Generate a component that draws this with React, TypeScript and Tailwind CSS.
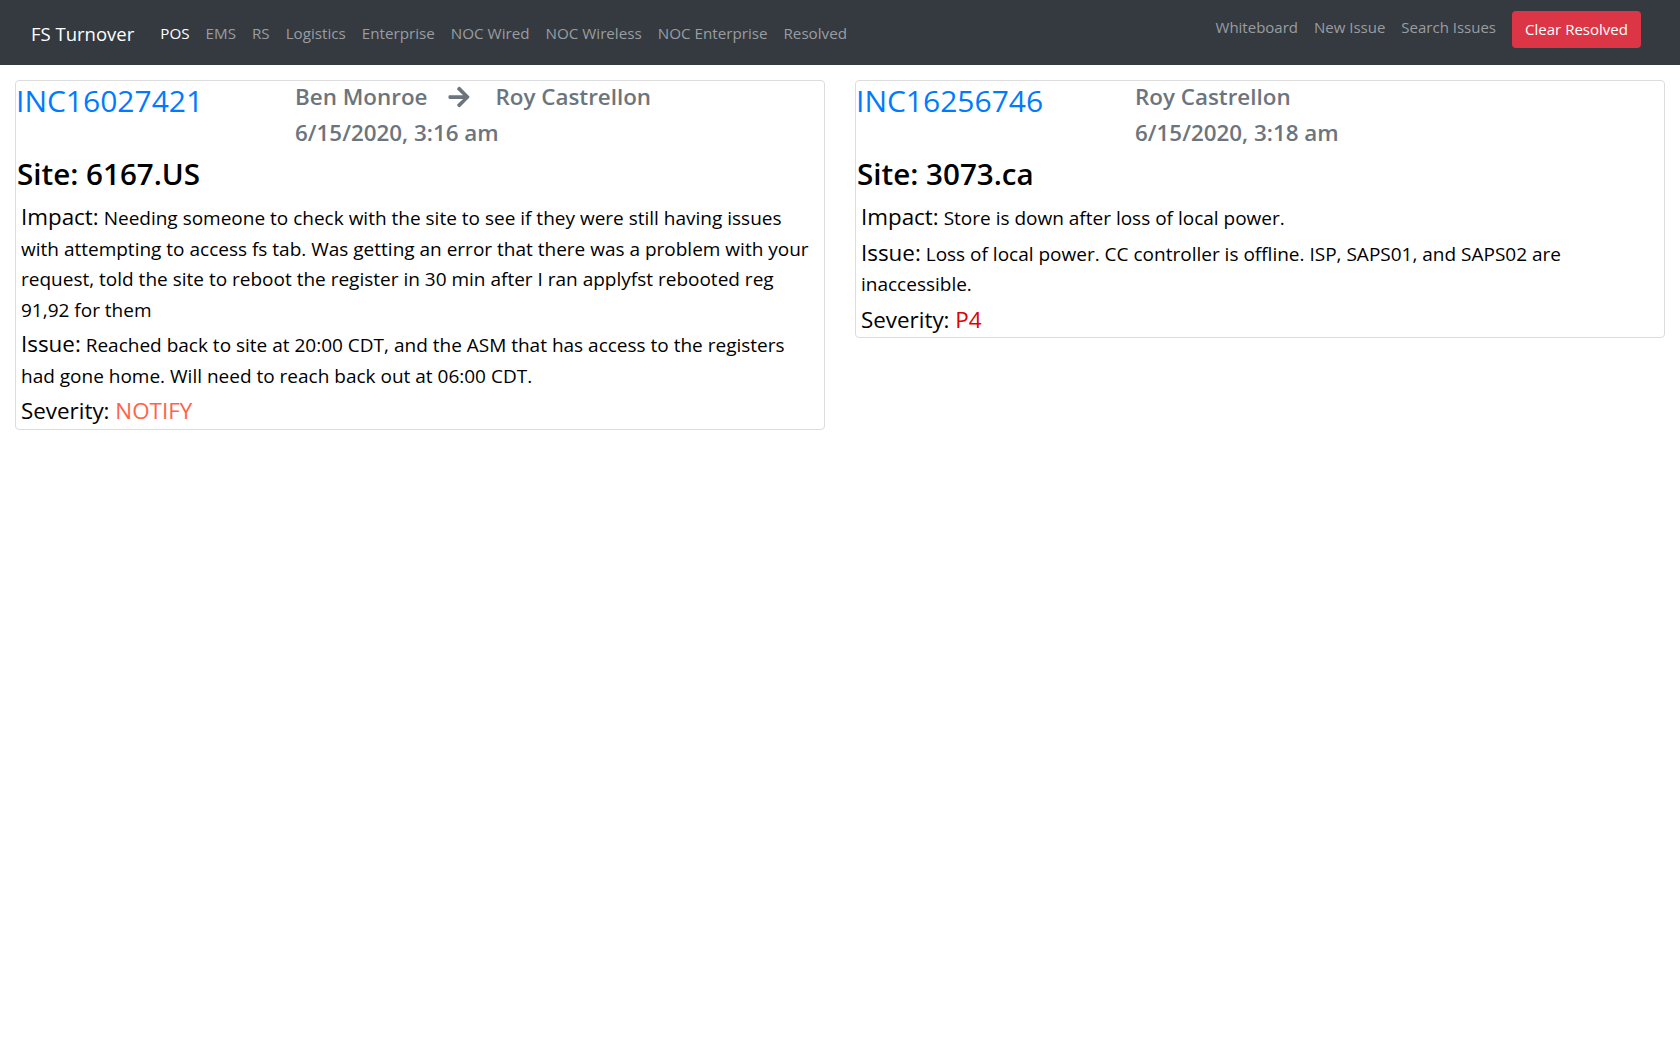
import React from 'react';
import { FaArrowRight } from 'react-icons/fa';

type Ticket = {
  id: string;
  from?: string;
  to: string;
  date: string;
  site: string;
  impact: string;
  issue: string;
  severity: string;
  severityColor: string;
};

const navLinks = ['POS', 'EMS', 'RS', 'Logistics', 'Enterprise', 'NOC Wired', 'NOC Wireless', 'NOC Enterprise', 'Resolved'];

const tickets: Ticket[] = [
  {
    id: 'INC16027421',
    from: 'Ben Monroe',
    to: 'Roy Castrellon',
    date: '6/15/2020, 3:16 am',
    site: '6167.US',
    impact:
      'Needing someone to check with the site to see if they were still having issues with attempting to access fs tab. Was getting an error that there was a problem with your request, told the site to reboot the register in 30 min after I ran applyfst rebooted reg 91,92 for them',
    issue:
      'Reached back to site at 20:00 CDT, and the ASM that has access to the registers had gone home. Will need to reach back out at 06:00 CDT.',
    severity: 'NOTIFY',
    severityColor: 'text-[#ff6347]',
  },
  {
    id: 'INC16256746',
    to: 'Roy Castrellon',
    date: '6/15/2020, 3:18 am',
    site: '3073.ca',
    impact: 'Store is down after loss of local power.',
    issue: 'Loss of local power. CC controller is offline. ISP, SAPS01, and SAPS02 are inaccessible.',
    severity: 'P4',
    severityColor: 'text-[#e00000]',
  },
];

function TicketCard({ t }: { t: Ticket }) {
  return (
    <div className="border border-[#dcdcdc] rounded-[4px] pb-[2px]">
      {/* En-tête : numéro + personnes */}
      <div className="flex">
        <div className="w-[279px] text-[30px] leading-[38px] mt-[1px] text-[#007bff]">{t.id}</div>
        <div className="text-[22.4px] font-semibold text-[#6c757d]">
          <div className="flex items-center leading-[29px] mt-[1px] mb-[7px]">
            {t.from && (
              <>
                <span>{t.from}</span>
                <FaArrowRight size={24} className="ml-[20px] mr-[24px] text-[#6c757d]" />
              </>
            )}
            <span>{t.to}</span>
          </div>
          <div className="leading-[29px]">{t.date}</div>
        </div>
      </div>

      <div className="pl-[1px] mt-[8px] text-[29.6px] leading-[38px] font-semibold text-black">Site: {t.site}</div>

      <div className="px-[5px] mt-[10px] text-black flex flex-col gap-[5px]">
        <p className="text-[19px] leading-[30.5px]">
          <span className="text-[22.4px] leading-none">Impact:</span> {t.impact}
        </p>
        <p className="text-[19px] leading-[30.5px]">
          <span className="text-[22.4px] leading-none">Issue:</span> {t.issue}
        </p>
        <p className="text-[22.4px] leading-[30.5px]">
          Severity: <span className={t.severityColor}>{t.severity}</span>
        </p>
      </div>
    </div>
  );
}

export default function App() {
  return (
    <div className="min-h-screen bg-white font-['Open_Sans',sans-serif]">
      <nav className="h-[65px] bg-[#343a40] flex items-center justify-between pl-[31px] pr-[39px]">
        <div className="flex items-center">
          <span className="text-[18.5px] text-white mr-[18px] mt-[2px]">FS Turnover</span>
          <div className="flex items-center mt-[2px]">
            {navLinks.map((l, i) => (
              <a key={l} className={`px-[8px] text-[15.2px] ${i === 0 ? 'text-white' : 'text-[#9a9da0]'}`}>
                {l}
              </a>
            ))}
          </div>
        </div>
        <div className="flex items-center">
          <div className="flex items-center mb-[10px]">
            {['Whiteboard', 'New Issue', 'Search Issues'].map((l) => (
              <a key={l} className="px-[8px] text-[15px] text-[#9a9da0]">
                {l}
              </a>
            ))}
          </div>
          <button className="ml-[8px] mb-[6px] h-[37px] w-[129px] rounded-[4px] bg-[#dc3545] text-white text-[15px]">
            Clear Resolved
          </button>
        </div>
      </nav>

      {/* Liste des tickets */}
      <div className="grid grid-cols-2 items-start pt-[15px]">
        {tickets.map((t) => (
          <div key={t.id} className="px-[15px]">
            <TicketCard t={t} />
          </div>
        ))}
      </div>
    </div>
  );
}
